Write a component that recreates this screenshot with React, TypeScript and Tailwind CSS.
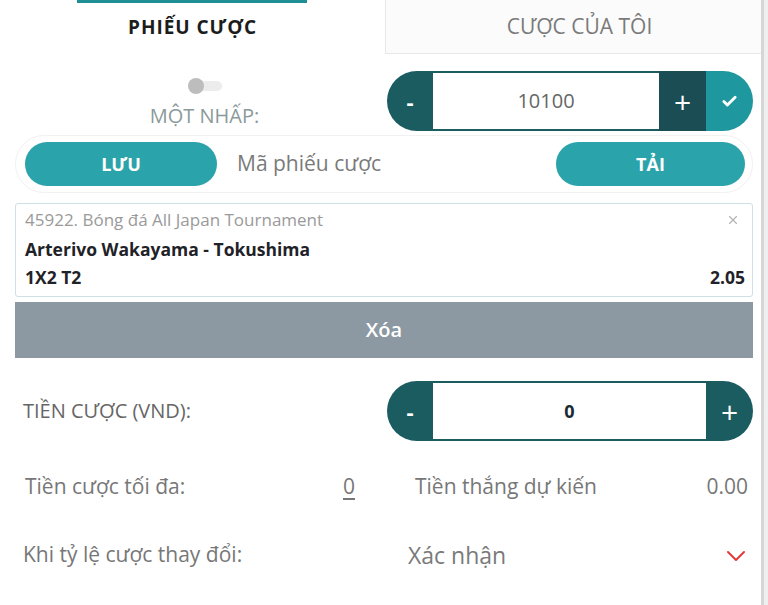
import { Check, X } from "lucide-react";

function Stepper({ value, bold, withCheck }: { value: string; bold?: boolean; withCheck?: boolean }) {
  return (
    <div className="flex h-[60px] w-[366px] overflow-hidden rounded-full">
      <button className="flex w-[46px] items-center justify-center bg-[#1b5c60] text-[22px] font-bold text-white">-</button>
      <div
        className={`flex flex-1 items-center justify-center border-y-2 border-[#1b5c60] bg-white ${
          bold ? "text-[18px] font-bold text-[#1a2a33]" : "text-[20px] text-[#666]"
        }`}
      >
        {value}
      </div>
      <button
        className={`flex w-[47px] items-center justify-center text-[30px] text-white ${
          withCheck ? "bg-[#1b4e54]" : "bg-[#1b5c60]"
        }`}
      >
        +
      </button>
      {withCheck && (
        <button className="flex w-[47px] items-center justify-center bg-[#1f979e] text-white">
          <Check size={17} strokeWidth={4} />
        </button>
      )}
    </div>
  );
}

export default function App() {
  return (
    <div className="flex h-[605px] w-[768px] bg-white font-['Open_Sans',sans-serif]">
      <div className="flex w-[761px] flex-col">
        {/* tabs */}
        <div className="flex h-[54px]">
          <div className="relative flex w-[385px] items-center justify-center">
            <div className="absolute left-[77px] top-0 h-[3px] w-[230px] bg-[#1f8f95]" />
            <span className="text-[19px] font-bold tracking-[0.05em] text-[#1c1c1c]">PHIẾU CƯỢC</span>
          </div>
          <div className="flex flex-1 items-center justify-center border-b border-l border-[#e8e8e8] bg-[#fbfbfb] pl-[12px]">
            <span className="text-[21px] text-[#7a7a7a]">CƯỢC CỦA TÔI</span>
          </div>
        </div>

        {/* one-click */}
        <div className="mt-[17px] flex items-center pr-[8px]">
          <div className="flex w-[387px] flex-col items-center pl-[22px] pt-[6px]">
            <div className="relative h-[16px] w-[34px]">
              <div className="absolute left-[8px] top-[3px] h-[10px] w-[26px] rounded-full bg-[#ececec]" />
              <div className="absolute left-0 top-0 h-[16px] w-[16px] rounded-full bg-[#bdbdbd]" />
            </div>
            <span className="mt-[8px] text-[20px] leading-[28px] text-[#8a9a9a]">MỘT NHẤP:</span>
          </div>
          <Stepper value="10100" withCheck />
        </div>

        {/* coupon code */}
        <div className="ml-[15px] mr-[8px] mt-[4px] flex h-[58px] items-center rounded-full border border-[#f1f1f1] pl-[9px] pr-[7px]">
          <button className="h-[44px] w-[192px] rounded-full bg-[#2ba3aa] text-[18px] font-bold text-white">LƯU</button>
          <span className="ml-[20px] flex-1 text-[21px] text-[#7a7a7a]">Mã phiếu cược</span>
          <button className="h-[44px] w-[189px] rounded-full bg-[#2ba3aa] text-[18px] font-bold text-white">TẢI</button>
        </div>

        {/* bet card */}
        <div className="ml-[15px] mr-[8px] mt-[10px] flex h-[94px] flex-col rounded-[3px] border border-[#cfdfe6] pl-[9px] pr-[7px] pt-[3px]">
          <div className="flex items-center justify-between">
            <span className="text-[17px] text-[#9a9a9a]">45922. Bóng đá All Japan Tournament</span>
            <X size={14} className="mr-[5px] text-[#b5b5b5]" />
          </div>
          <span className="mt-[3px] text-[17.5px] font-bold text-[#1f2328]">Arterivo Wakayama - Tokushima</span>
          <div className="mt-[2px] flex justify-between">
            <span className="text-[17.5px] font-bold text-[#1f2328]">1X2 T2</span>
            <span className="text-[17.5px] font-bold text-[#1f2328]">2.05</span>
          </div>
        </div>

        {/* delete */}
        <button className="ml-[15px] mr-[8px] mt-[5px] h-[56px] bg-[#8c99a2] text-[20px] font-semibold text-white">Xóa</button>

        {/* stake */}
        <div className="mt-[23px] flex items-center pr-[8px]">
          <span className="w-[387px] pl-[23px] text-[20px] text-[#666]">TIỀN CƯỢC (VND):</span>
          <Stepper value="0" bold />
        </div>

        {/* max / win */}
        <div className="mt-[30px] flex items-center text-[21px] text-[#777]">
          <div className="flex w-[355px] justify-between pl-[25px]">
            <span>Tiền cược tối đa:</span>
            <span className="underline underline-offset-4">0</span>
          </div>
          <div className="ml-[60px] flex flex-1 justify-between pr-[13px]">
            <span>Tiền thắng dự kiến</span>
            <span>0.00</span>
          </div>
        </div>

        {/* odds change */}
        <div className="mt-[35px] flex items-center">
          <span className="w-[408px] pl-[23px] text-[21px] text-[#777]">Khi tỷ lệ cược thay đổi:</span>
          <div className="flex flex-1 items-center justify-between pr-[15px]">
            <span className="text-[23px] text-[#7a7a7a]">Xác nhận</span>
            <svg width="20" height="12" viewBox="0 0 20 12" className="mt-[2px]">
              <polyline points="2,2 10,10 18,2" fill="none" stroke="#e23b3b" strokeWidth="2" strokeLinecap="round" strokeLinejoin="round" />
            </svg>
          </div>
        </div>
      </div>
      <div className="w-[3px] bg-[#d6d6d6]" />
      <div className="flex-1 bg-[#efefef]" />
    </div>
  );
}
